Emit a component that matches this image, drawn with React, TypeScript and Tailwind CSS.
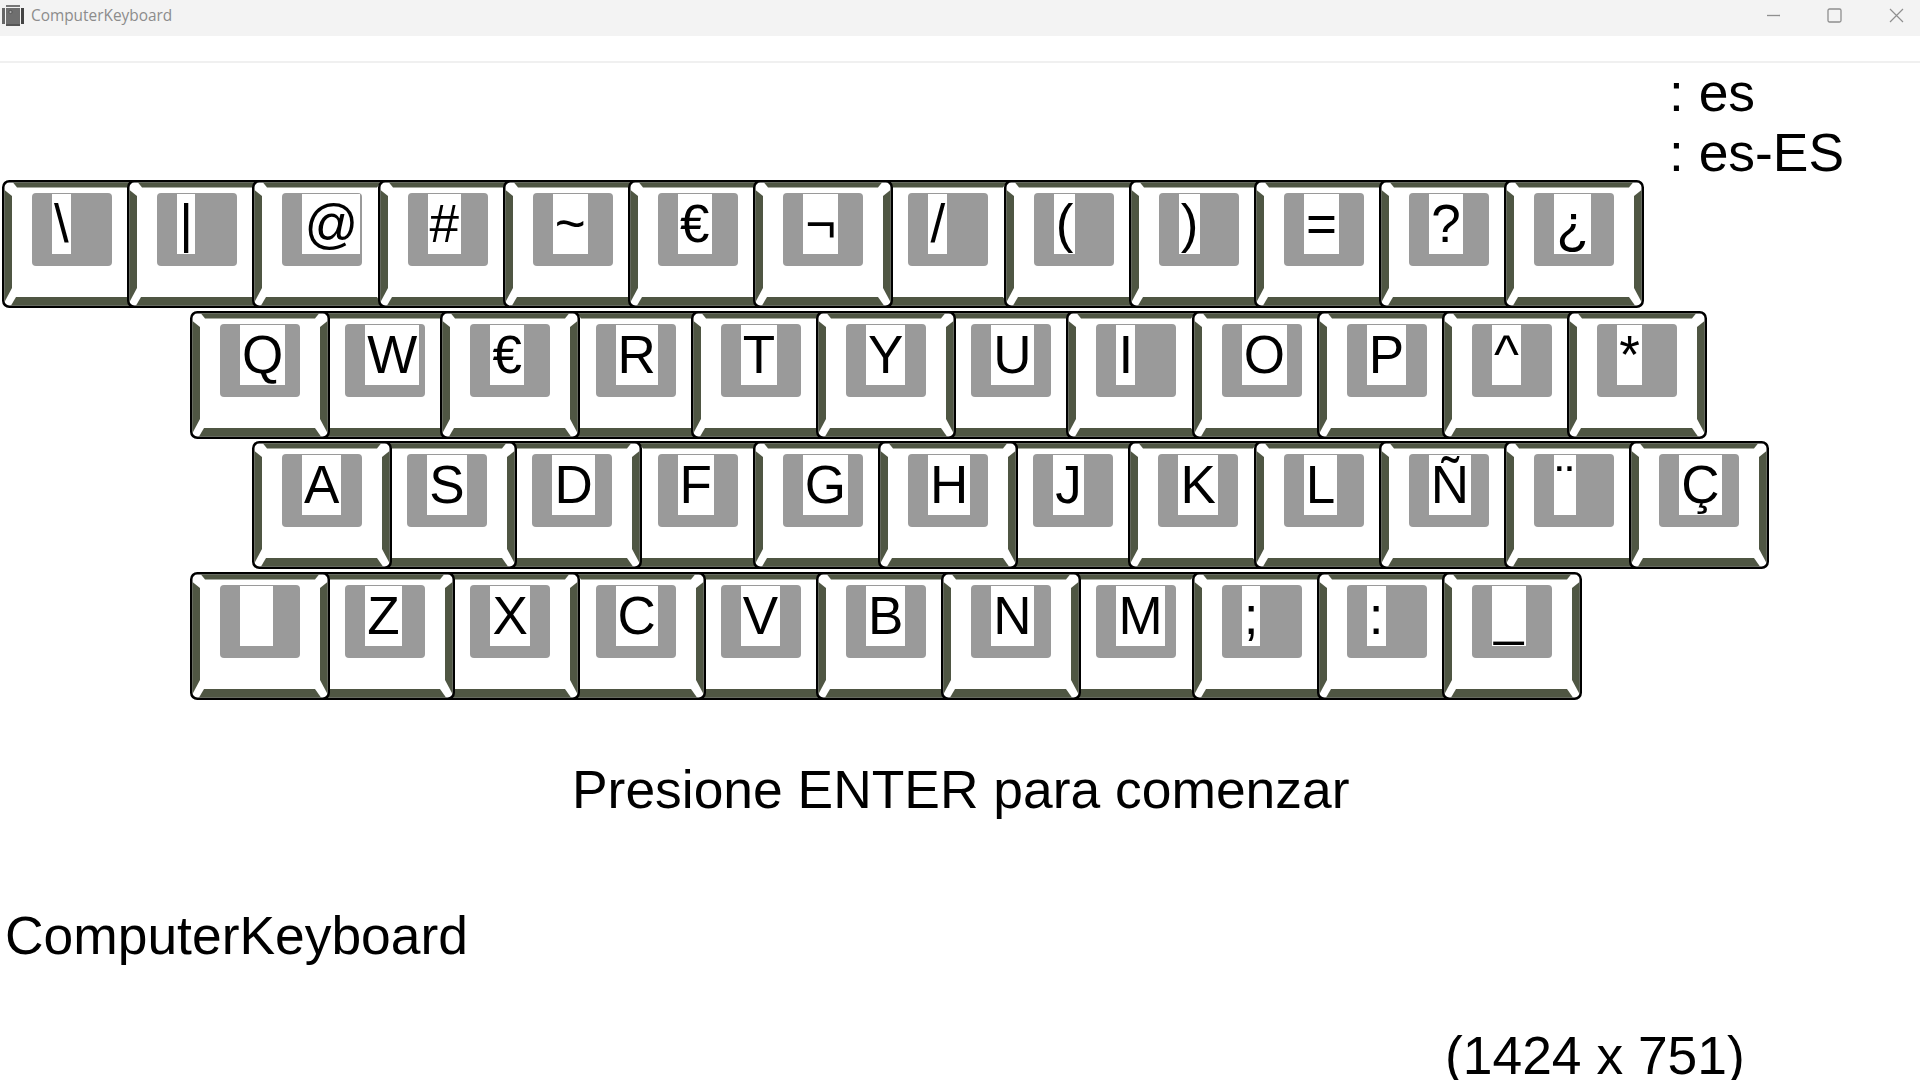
import React from 'react';

type KeyDef = { label: string; z?: string };

const k = (label: string, z?: string): KeyDef => ({ label, z });

const row1 = [k('\\'), k('|'), k('@'), k('#'), k('~'), k('€'), k('¬', 'z-10'), k('/'), k('('), k(')'), k('='), k('?'), k('¿')];
const row2 = [k('Q', 'z-10'), k('W'), k('€', 'z-10'), k('R'), k('T'), k('Y', 'z-10'), k('U'), k('I'), k('O'), k('P'), k('^'), k('*')];
const row3 = [k('A', 'z-30'), k('S', 'z-20'), k('D', 'z-10'), k('F'), k('G'), k('H', 'z-10'), k('J'), k('K'), k('L'), k('Ñ'), k('¨'), k('Ç')];
const row4 = [k('\u00a0\u00a0', 'z-40'), k('Z', 'z-30'), k('X', 'z-20'), k('C', 'z-10'), k('V'), k('B'), k('N', 'z-10'), k('M'), k(';'), k(':'), k('_')];

function Key({ label, z }: KeyDef) {
  return (
    <div className={`relative w-[140px] h-[128px] shrink-0 -mr-[14.8px] pt-[13px] pl-[30px] ${z ?? ''}`}>
      {/* key bevel */}
      <svg className="absolute inset-0" width="140" height="128" viewBox="0 0 140 128">
        <rect x="1.25" y="1.25" width="137.5" height="125.5" rx="6" fill="#fff" stroke="#000" strokeWidth="2.5" />
        <polygon points="11,2.5 129,2.5 125,7.5 15,7.5" fill="#4f5643" />
        <polygon points="2.5,10 10,16 10,108 2.5,122" fill="#4f5643" />
        <polygon points="137.5,10 130,16 130,108 137.5,122" fill="#4f5643" />
        <polygon points="14,117 125,117 131,125.5 9,125.5" fill="#4f5643" />
      </svg>
      <div className="relative flex w-[80px] h-[73px] pl-[20px] pt-px rounded-[4px] bg-[#9a9a9a] overflow-hidden">
        <span className="h-[60px] px-[2px] bg-white text-black text-[53px] leading-[60px] whitespace-pre">{label}</span>
      </div>
    </div>
  );
}

function Row({ keys, className }: { keys: KeyDef[]; className: string }) {
  return (
    <div className={`flex ${className}`}>
      {keys.map((key, i) => (
        <Key key={i} {...key} />
      ))}
    </div>
  );
}

function AppIcon() {
  return (
    <svg width="24" height="26" viewBox="0 0 24 26">
      <rect x="6" y="4" width="14" height="2" fill="#777" />
      <rect x="2" y="7" width="3" height="16" fill="#666" />
      <rect x="21" y="7" width="3" height="16" fill="#444" />
      <rect x="6" y="7" width="14" height="16" fill="#6f6f6f" />
      <rect x="6" y="23" width="14" height="2" fill="#555" />
      <circle cx="10.5" cy="11" r="1.6" fill="#aaa" stroke="#444" strokeWidth="0.7" />
    </svg>
  );
}

export default function App() {
  return (
    <div className="w-[1920px] h-[1080px] overflow-hidden bg-white text-black font-['Liberation_Sans',Arial,sans-serif]">
      <div className="flex items-start h-9 pt-[1px] bg-[#f3f3f3]">
        <AppIcon />
        <span className="ml-[7px] text-[15.4px] leading-[30px] text-[#8c8c8c] font-['Open_Sans',sans-serif]">ComputerKeyboard</span>
        <div className="flex items-center ml-auto pt-[7px]">
          <svg width="15" height="15" viewBox="0 0 15 15" className="mr-[46px]">
            <line x1="1" y1="7.5" x2="14" y2="7.5" stroke="#8f8f8f" strokeWidth="1.3" />
          </svg>
          <svg width="15" height="15" viewBox="0 0 15 15" className="mr-[47px]">
            <rect x="1" y="1" width="13" height="13" rx="1.5" fill="none" stroke="#8f8f8f" strokeWidth="1.3" />
          </svg>
          <svg width="15" height="15" viewBox="0 0 15 15" className="mr-[16px]">
            <path d="M1 1 L14 14 M14 1 L1 14" stroke="#8f8f8f" strokeWidth="1.2" fill="none" />
          </svg>
        </div>
      </div>
      <div className="h-[27px] border-b-2 border-[#f0f0f0]" />

      <div className="h-[117px] pl-[1669px] text-[53.4px] leading-[60px] whitespace-nowrap">
        <div>: es</div>
        <div>: es-ES</div>
      </div>

      <div className="flex flex-col gap-[2.7px]">
        <Row keys={row1} className="pl-[2px]" />
        <Row keys={row2} className="pl-[190px]" />
        <Row keys={row3} className="pl-[252px]" />
        <Row keys={row4} className="pl-[190px]" />
      </div>

      <div className="mt-[60px] pl-[572px] text-[53.4px] leading-[60px] whitespace-nowrap">Presione ENTER para comenzar</div>
      <div className="mt-[86px] pl-[5px] text-[53.4px] leading-[60px]">ComputerKeyboard</div>
      <div className="mt-[60px] pl-[1445px] text-[53.4px] leading-[60px] whitespace-nowrap">(1424 x 751)</div>
    </div>
  );
}
